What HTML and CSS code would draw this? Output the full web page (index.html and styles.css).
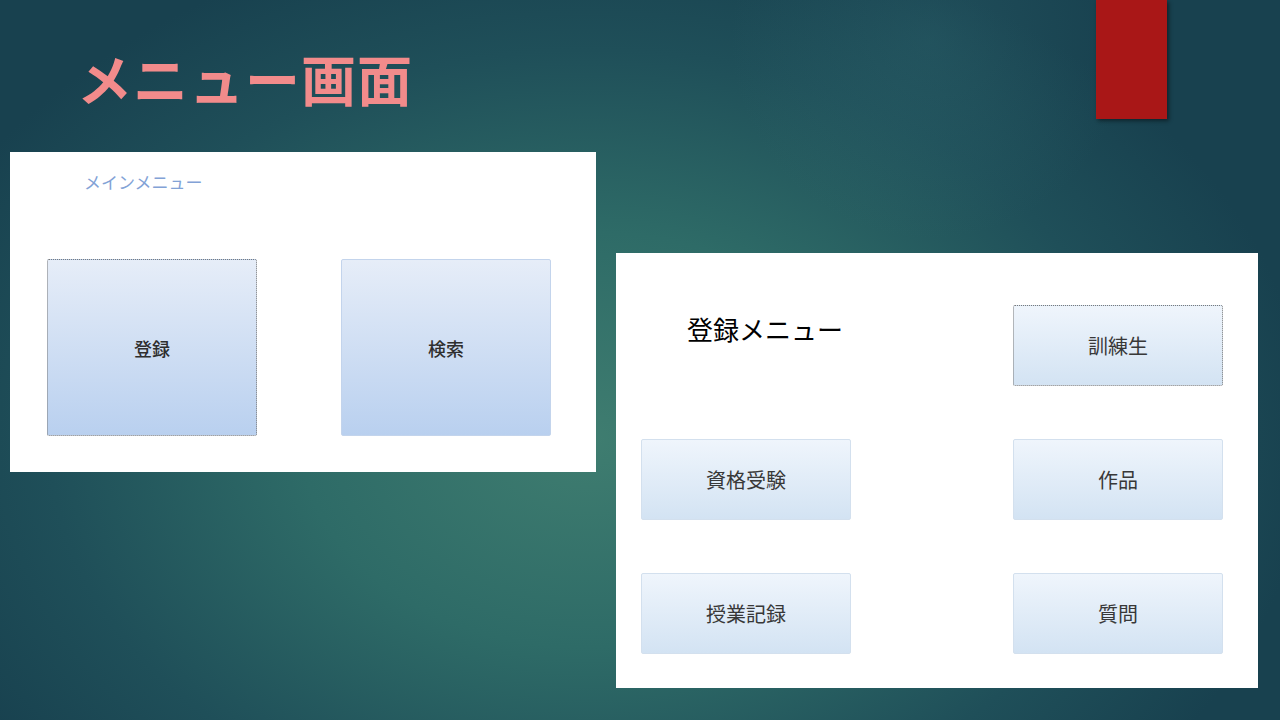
FILE: index.html
```html
<!DOCTYPE html>
<html lang="ja">
<head>
  <meta charset="UTF-8" />
  <meta name="viewport" content="width=device-width, initial-scale=1.0" />
  <title>メニュー画面</title>
  <link rel="stylesheet" href="styles.css">
</head>
<body>
  <div class="slide">
    <div class="tab"></div>
    <h1 class="title">メニュー画面</h1>

    <div class="panels">
      <section class="panel main-panel">
        <div class="main-title">メインメニュー</div>
        <div class="main-buttons">
          <div class="big-btn dotted">登録</div>
          <div class="big-btn">検索</div>
        </div>
      </section>

      <section class="panel reg-panel">
        <div class="reg-title">登録メニュー</div>
        <div class="btn dotted">訓練生</div>
        <div class="btn">資格受験</div>
        <div class="btn">作品</div>
        <div class="btn">授業記録</div>
        <div class="btn">質問</div>
      </section>
    </div>
  </div>
</body>
</html>
```

FILE: styles.css
```css
html, body { margin: 0; padding: 0; }
body { font-family: "Noto Sans CJK JP", "Noto Sans", sans-serif; }

.slide {
  position: relative;
  width: 1280px;
  height: 720px;
  overflow: hidden;
  box-sizing: border-box;
  padding-top: 50px;
  background:
    radial-gradient(circle 200px at 930px 40px, rgba(60, 125, 130, 0.22), rgba(60, 125, 130, 0) 100%),
    radial-gradient(ellipse 720px 520px at 590px 440px, #3f7d70 0%, #2e6b67 40%, #1f4f59 75%, #18414f 100%);
}

.tab {
  position: absolute;
  left: 1096px;
  top: 0;
  width: 71px;
  height: 119px;
  background: #a91717;
  box-shadow: 2px 2px 4px rgba(0, 0, 0, 0.45);
}

.title {
  margin: 0 0 0 77px;
  font-size: 55px;
  line-height: 55px;
  font-weight: bold;
  color: #f28b8b;
  letter-spacing: 1px;
}

.panels {
  display: flex;
  align-items: flex-start;
  gap: 20px;
  margin: 47px 0 0 10px;
}

.panel { background: #fff; box-sizing: border-box; }

/* main menu */
.main-panel { width: 586px; height: 320px; padding-top: 20px; }
.main-title {
  margin-left: 74px;
  font-size: 17px;
  line-height: 20px;
  color: #82a2d6;
}
.main-buttons { display: flex; gap: 84px; margin: 67px 0 0 37px; }
.big-btn {
  width: 210px;
  height: 177px;
  box-sizing: border-box;
  display: flex;
  align-items: center;
  justify-content: center;
  font-size: 18px;
  font-weight: 500;
  color: #2e2e2e;
  border: 1px solid #c3d4ec;
  border-radius: 2px;
  background: linear-gradient(#e6edf8, #b9d0ef);
}

/* register menu */
.reg-panel {
  margin-top: 101px;
  width: 642px;
  height: 435px;
  padding: 52px 0 0 25px;
  display: grid;
  grid-template-columns: 210px 210px;
  grid-auto-rows: 81px;
  column-gap: 162px;
  row-gap: 53px;
  align-content: start;
}
.reg-title {
  padding: 8px 0 0 46px;
  font-size: 26px;
  line-height: 31px;
  color: #000;
  white-space: nowrap;
}
.btn {
  box-sizing: border-box;
  display: flex;
  align-items: center;
  justify-content: center;
  font-size: 20px;
  color: #383838;
  border: 1px solid #d3e0ee;
  border-radius: 2px;
  background: linear-gradient(#eff5fc, #d3e3f3);
}

.dotted { border: 1px dotted #7a7a7a; }
```
